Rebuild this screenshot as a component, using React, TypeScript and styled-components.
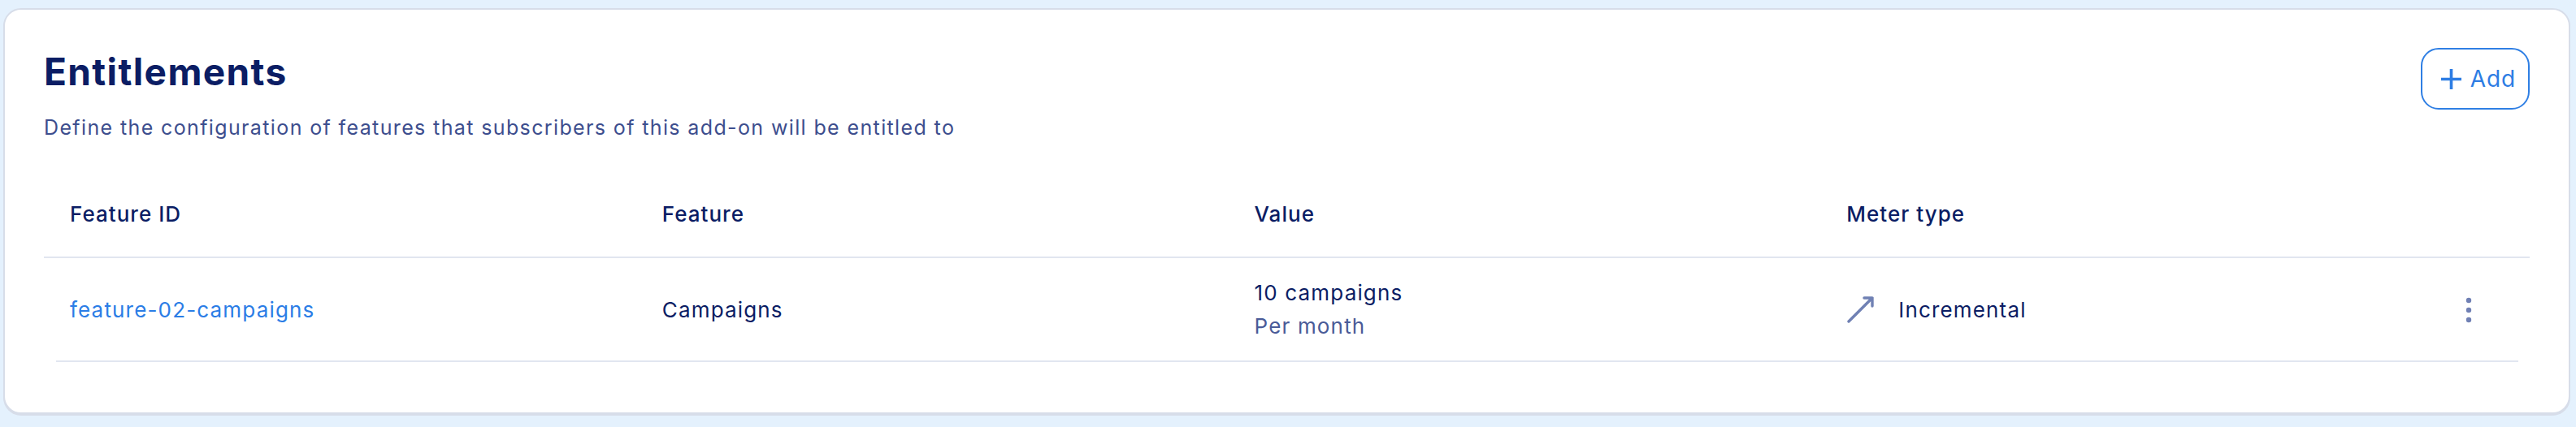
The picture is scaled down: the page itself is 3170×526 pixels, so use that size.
import React from 'react';
import styled, { createGlobalStyle } from 'styled-components';

const GlobalStyle = createGlobalStyle`
  html, body {
    margin: 0;
    background: #e4f1fd;
  }
  body {
    padding: 10px 7px 14px 4px;
    font-family: Inter, "Noto Sans", sans-serif;
    color: #0b1d64;
  }
`;

const Card = styled.section`
  background: #ffffff;
  border: 2px solid #d7dde9;
  border-radius: 22px;
  box-shadow: 0 2px 0 #d7dde9;
  padding: 48px 48px 62px;
`;

const Header = styled.div`
  display: flex;
  justify-content: space-between;
  align-items: flex-start;
`;

const Title = styled.h2`
  margin: 0;
  font-size: 46px;
  font-weight: 700;
  line-height: normal;
  letter-spacing: 0.03em;
  color: #0b1d64;
`;

const Subtitle = styled.p`
  margin: 26px 0 0;
  font-size: 25px;
  line-height: normal;
  letter-spacing: 0.055em;
  color: #3d4e8e;
`;

const AddButton = styled.button`
  display: flex;
  align-items: center;
  gap: 10px;
  height: 76px;
  margin-top: -1px;
  padding: 0 15px 0 22px;
  background: #fff;
  border: 2px solid #2f7fe4;
  border-radius: 22px;
  color: #2d7de4;
  font-family: inherit;
  font-size: 28px;
  font-weight: 400;
  letter-spacing: 0.03em;
`;

const Table = styled.div`
  margin-top: 38px;
`;

const Row = styled.div<{ head?: boolean }>`
  display: grid;
  grid-template-columns: repeat(4, 1fr) 144px;
  align-items: center;
  ${({ head }) =>
    head
      ? 'border-bottom: 2px solid #e1e6f0;'
      : 'background: linear-gradient(#e1e6f0, #e1e6f0) 15px 100% / calc(100% - 29px) 2px no-repeat;'}
`;

const HeadCell = styled.div`
  padding: 38px 32px 37px;
  font-size: 26px;
  font-weight: 500;
  letter-spacing: 0.04em;
  color: #0b1d64;
`;

const Cell = styled.div<{ tone?: 'link' | 'plain' }>`
  padding: 27px 32px 29px;
  font-size: 26px;
  letter-spacing: 0.045em;
  color: ${({ tone }) => (tone === 'link' ? '#2b7de6' : '#0b1d64')};
`;

const Stack = styled.div`
  display: flex;
  flex-direction: column;
  gap: 10px;
`;

const Sub = styled.span`
  color: #4a5b98;
`;

const Meter = styled.div`
  display: flex;
  align-items: center;
  gap: 30px;
`;

const Kebab = styled.div`
  display: flex;
  justify-content: center;
  padding-right: 6px;
`;

export default function App() {
  return (
    <>
      <GlobalStyle />
      <Card>
        <Header>
          <div>
            <Title>Entitlements</Title>
            <Subtitle>
              Define the configuration of features that subscribers of this add-on will be entitled to
            </Subtitle>
          </div>
          <AddButton>
            <svg width="27" height="27" viewBox="0 0 27 27">
              <path d="M13.5 1v25M1 13.5h25" stroke="#2d7de4" strokeWidth="3.6" fill="none" />
            </svg>
            Add
          </AddButton>
        </Header>
        <Table>
          <Row head>
            <HeadCell>Feature ID</HeadCell>
            <HeadCell>Feature</HeadCell>
            <HeadCell>Value</HeadCell>
            <HeadCell>Meter type</HeadCell>
            <HeadCell />
          </Row>
          <Row>
            <Cell tone="link">feature-02-campaigns</Cell>
            <Cell>Campaigns</Cell>
            <Cell>
              <Stack>
                <span>10 campaigns</span>
                <Sub>Per month</Sub>
              </Stack>
            </Cell>
            <Cell>
              <Meter>
                <svg width="34" height="34" viewBox="0 0 34 34">
                  <path
                    d="M3 32L32 3M22 3h10v10"
                    stroke="#7081b4"
                    strokeWidth="3.4"
                    strokeLinecap="round"
                    strokeLinejoin="round"
                    fill="none"
                  />
                </svg>
                Incremental
              </Meter>
            </Cell>
            <Kebab>
              <svg width="8" height="32" viewBox="0 0 8 32">
                <circle cx="4" cy="4" r="3.2" fill="#7080b4" />
                <circle cx="4" cy="16" r="3.2" fill="#7080b4" />
                <circle cx="4" cy="28" r="3.2" fill="#7080b4" />
              </svg>
            </Kebab>
          </Row>
        </Table>
      </Card>
    </>
  );
}
